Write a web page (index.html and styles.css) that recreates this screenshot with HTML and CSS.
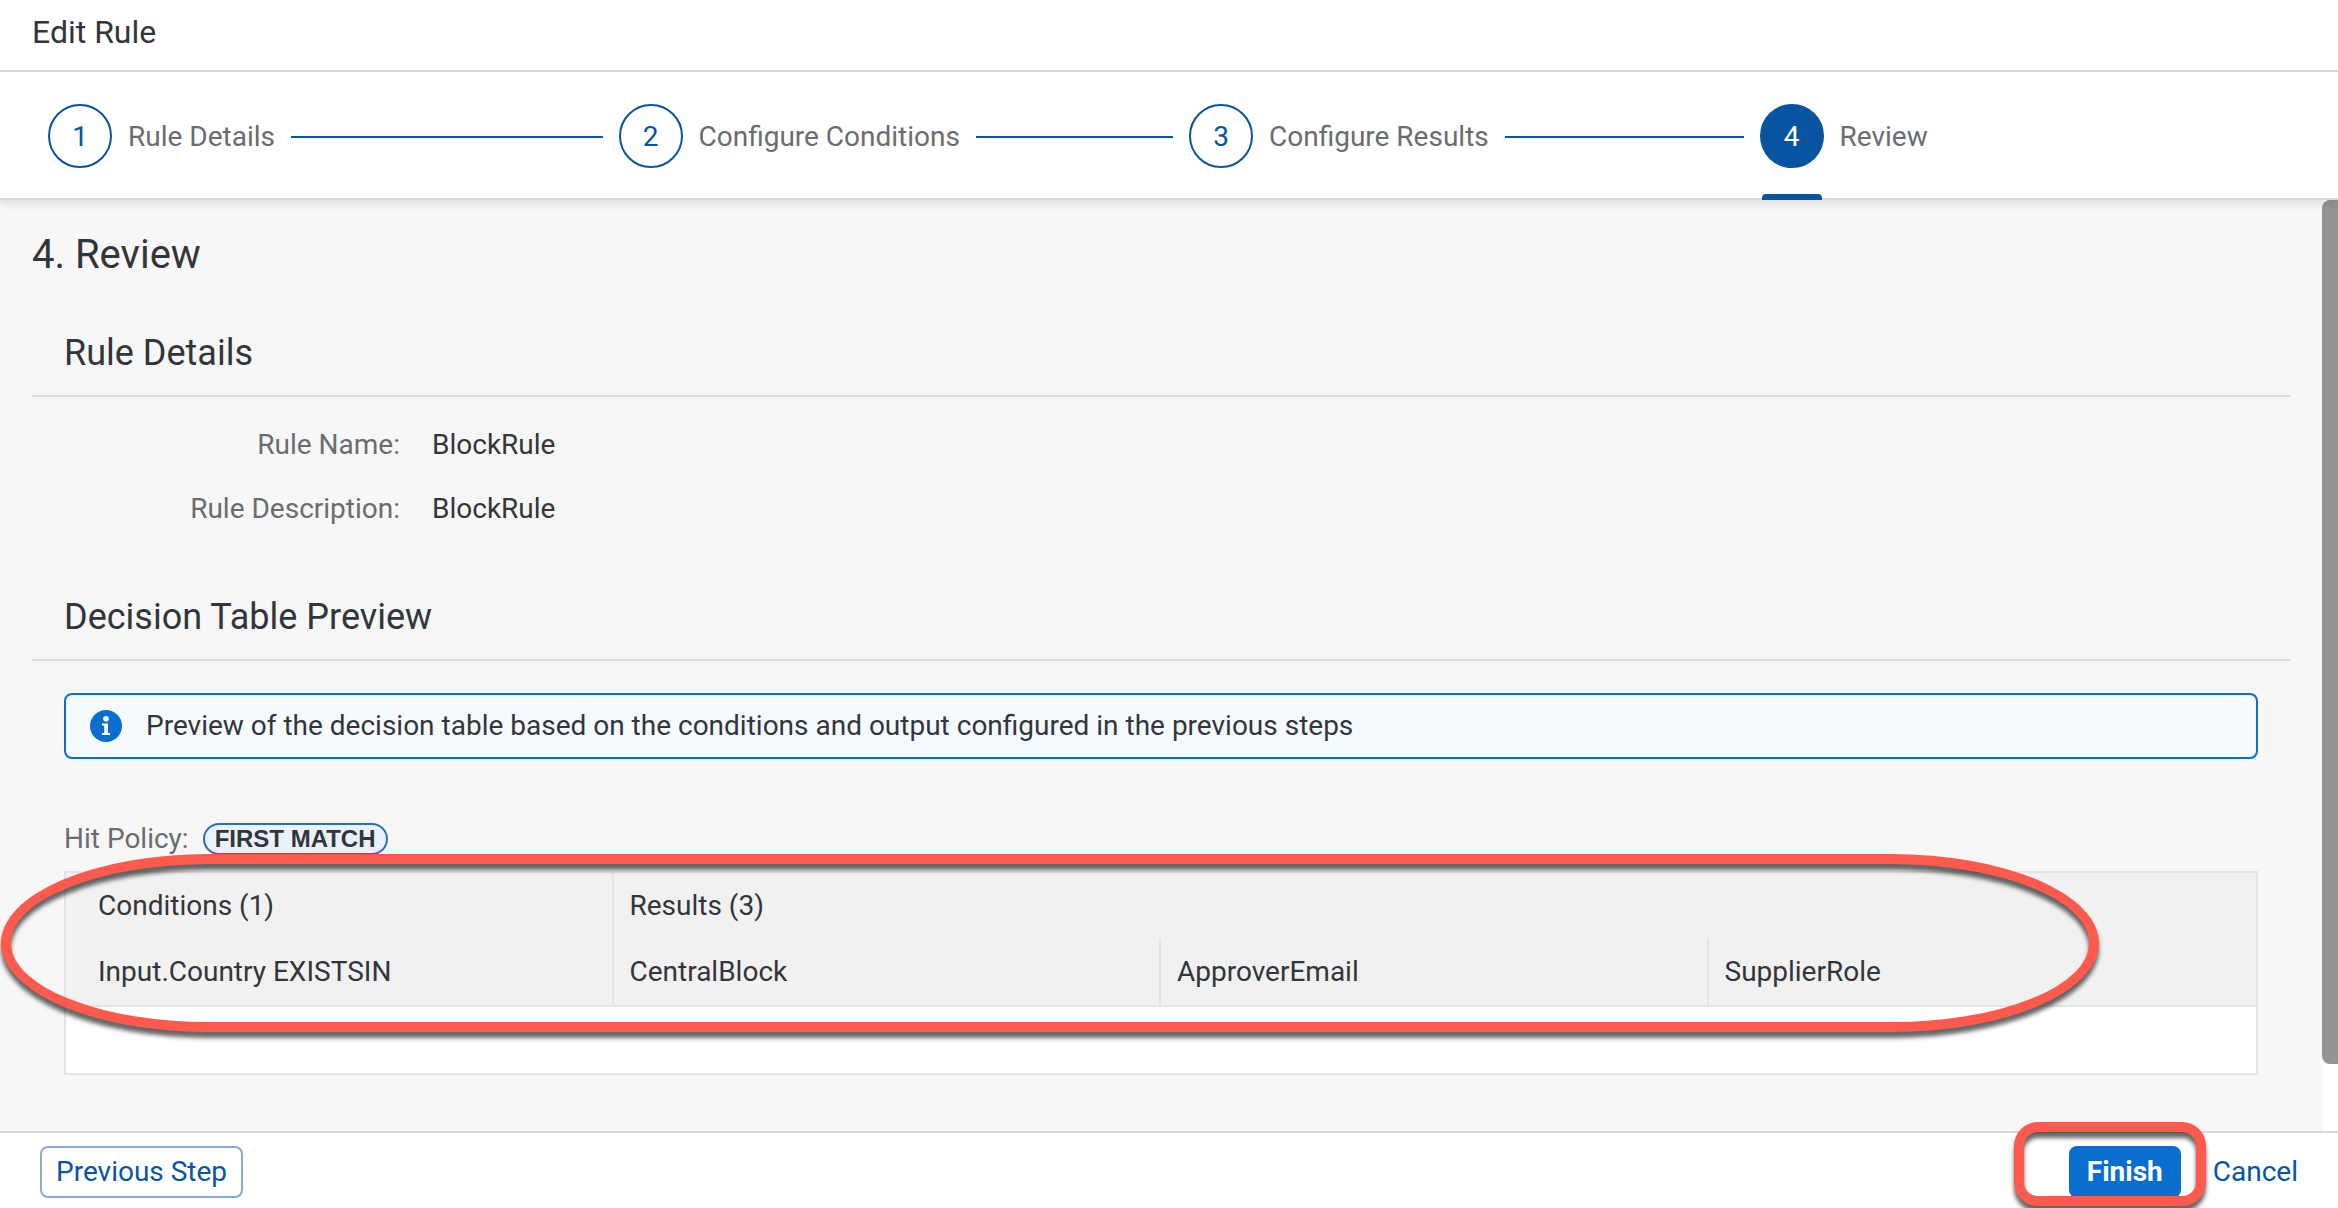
FILE: index.html
```html
<!DOCTYPE html>
<html lang="en">
<head>
<meta charset="utf-8">
<meta name="viewport" content="width=device-width, initial-scale=1">
<title>Edit Rule</title>
<link rel="stylesheet" href="styles.css">
</head>
<body>
<header class="title-bar"><h1 class="title">Edit Rule</h1></header>

<nav class="wizard" aria-label="Steps">
  <ol class="steps">
    <li class="step"><span class="step-circle">1</span><span class="step-label">Rule Details</span><span class="step-line"></span></li>
    <li class="step"><span class="step-circle">2</span><span class="step-label">Configure Conditions</span><span class="step-line"></span></li>
    <li class="step"><span class="step-circle">3</span><span class="step-label">Configure Results</span><span class="step-line"></span></li>
    <li class="step step-current" aria-current="step"><span class="step-circle">4</span><span class="step-label">Review</span></li>
  </ol>
</nav>

<div class="viewport">
  <main class="content">
    <h2 class="page-heading">4. Review</h2>

    <section class="section">
      <h3 class="section-heading">Rule Details</h3>
      <dl class="details">
        <dt>Rule Name:</dt><dd>BlockRule</dd>
        <dt>Rule Description:</dt><dd>BlockRule</dd>
      </dl>
    </section>

    <section class="section">
      <h3 class="section-heading">Decision Table Preview</h3>
      <div class="section-body">
        <div class="message">
          <svg class="message-icon" viewBox="0 0 32 32" aria-hidden="true">
            <circle cx="16" cy="16" r="16" fill="#0a6ed1"/>
            <circle cx="16" cy="8.800" r="2.800" fill="#fff"/>
            <path d="M12 13.500h6v9.500h2v2h-8v-2h2.200v-7.500h-2.200z" fill="#fff"/>
          </svg>
          <span>Preview of the decision table based on the conditions and output configured in the previous steps</span>
        </div>

        <div class="policy"><span>Hit Policy:</span><span class="pill">FIRST MATCH</span></div>

        <div class="table-area">
          <table class="decision">
            <thead>
              <tr><th>Conditions (1)</th><th class="group" colspan="3">Results (3)</th></tr>
              <tr><th>Input.Country EXISTSIN</th><th>CentralBlock</th><th>ApproverEmail</th><th>SupplierRole</th></tr>
            </thead>
            <tbody><tr><td colspan="4"></td></tr></tbody>
          </table>
          <div class="marker marker-table"></div>
        </div>
      </div>
    </section>
  </main>
  <div class="scrollbar"><div class="scrollbar-thumb"></div></div>
</div>

<footer class="footer">
  <button class="button button-outline" type="button">Previous Step</button>
  <div class="footer-actions">
    <div class="finish"><button class="button button-primary" type="button">Finish</button><div class="marker marker-finish"></div></div>
    <button class="button button-plain" type="button">Cancel</button>
  </div>
</footer>
</body>
</html>
```
FILE: styles.css
```css
* { box-sizing: border-box; }

body {
  margin: 0;
  height: 100vh;
  display: flex;
  flex-direction: column;
  overflow: hidden;
  background: #fff;
  color: #32363a;
  font-family: Roboto, "Liberation Sans", sans-serif;
  font-size: 28px;
  line-height: 32px;
}

h1, h2, h3, ol, dl, dd { margin: 0; padding: 0; font-weight: 400; }

.title-bar { padding: 8px 32px 14px; border-bottom: 2px solid #d9d9d9; }
.title { font-size: 32px; line-height: 48px; }

.wizard {
  position: relative;
  z-index: 1;
  border-bottom: 2px solid #d9d9d9;
  background: #fff;
  box-shadow: 0 4px 8px rgba(0, 0, 0, 0.1);
}
.steps {
  display: grid;
  grid-template-columns: repeat(4, 1fr);
  padding: 32px 8px 30px 48px;
  list-style: none;
}
.step { position: relative; display: flex; align-items: center; gap: 16px; color: #6a6d70; }
.step-circle {
  flex: none;
  width: 64px;
  height: 64px;
  border: 2px solid #0854a0;
  border-radius: 50%;
  color: #0854a0;
  line-height: 62px;
  text-align: center;
}
.step-label, .step-line { margin-top: 2px; }
.step-label { white-space: nowrap; }
.step-line { flex: 1; height: 2px; margin-right: 16px; background: #0854a0; }
.step-current .step-circle { background: #0854a0; color: #fff; }
.step-current::after {
  content: "";
  position: absolute;
  left: 2px;
  bottom: -32px;
  width: 60px;
  height: 6px;
  border-radius: 4px 4px 0 0;
  background: #0854a0;
}

.viewport { flex: 1; min-height: 0; display: flex; }
.content { flex: 1; padding: 31px 32px 0; background: #f7f7f7; }
.page-heading { margin-bottom: 50px; font-size: 40px; line-height: 48px; }

.section-heading {
  padding: 0 32px 18px;
  border-bottom: 2px solid #d9d9d9;
  font-size: 36px;
  line-height: 48px;
}
.details {
  display: grid;
  grid-template-columns: 368px 1fr;
  gap: 32px;
  padding: 32px 0 68px;
}
.details dt { color: #6a6d70; text-align: right; }

.section-body { padding: 32px; }
.message {
  display: flex;
  align-items: center;
  gap: 24px;
  height: 66px;
  padding: 0 24px;
  border: 2px solid #0a6ed1;
  border-radius: 8px;
  background: #f5faff;
}
.message-icon { width: 32px; height: 32px; }

.policy { display: flex; align-items: center; gap: 14px; margin: 64px 0 16px; color: #6a6d70; }
.pill {
  padding: 0 10px;
  border: 2px solid #2a6db8;
  border-radius: 16px;
  background: #e9f2fb;
  color: #32363a;
  font-family: "Liberation Sans", sans-serif;
  font-size: 24px;
  font-weight: 700;
  line-height: 28px;
}

.table-area { position: relative; }
.decision {
  width: 100%;
  table-layout: fixed;
  border: 2px solid #e4e4e4;
  border-collapse: separate;
  border-spacing: 0;
  background: #fff;
}
.decision th {
  height: 66px;
  padding: 0 16px;
  border-right: 2px solid #e4e4e4;
  background: #f1f1f1;
  font-weight: 400;
  text-align: left;
}
.decision th:first-child { padding-left: 32px; }
.decision th:last-child { border-right: 0; }
.decision tr:last-child th { height: 68px; border-bottom: 2px solid #e4e4e4; }
.decision td { height: 66px; padding: 0; }

.marker {
  position: absolute;
  border: 10px solid #ff5a4d;
  filter: drop-shadow(0 6px 2px rgba(0, 0, 0, 0.6));
  pointer-events: none;
}
.marker-table { top: -17px; left: -63px; right: 159px; height: 178px; border-radius: 208px / 89px; }
.marker-finish { top: -24px; right: -25px; width: 192px; height: 84px; border-radius: 24px; }

.scrollbar { width: 16px; background: #fff; }
.scrollbar-thumb { height: calc(100% - 67px); border-radius: 8px 0 0 8px; background: #949494; }

.footer {
  display: flex;
  align-items: flex-start;
  justify-content: space-between;
  height: 77px;
  padding: 13px 24px 0 40px;
  border-top: 2px solid #d9d9d9;
  background: #fff;
}
.footer-actions { display: flex; gap: 16px; }
.finish { position: relative; }
.button {
  display: block;
  height: 52px;
  padding: 0 14px;
  border: 2px solid transparent;
  border-radius: 8px;
  background: transparent;
  color: #0854a0;
  font: inherit;
}
.button-outline { border-color: #8aaad0; }
.button-primary { padding: 0 16px; background: #0a6ed1; border-color: #0a6ed1; color: #fff; font-weight: 700; }
```
